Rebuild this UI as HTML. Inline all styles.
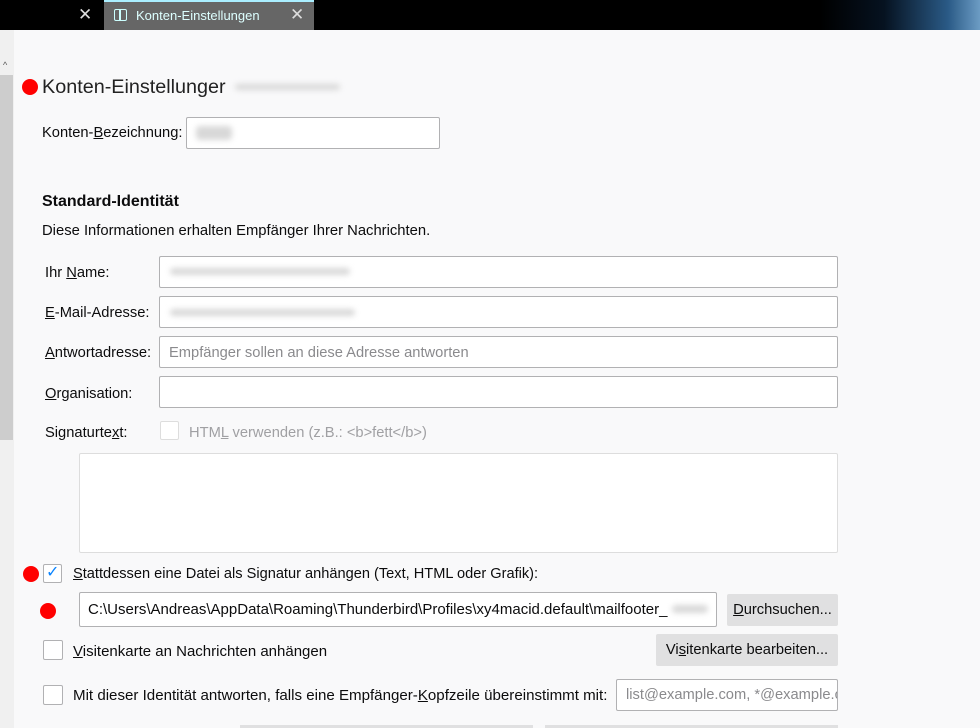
<!DOCTYPE html>
<html><head><meta charset="utf-8"><style>
*{box-sizing:border-box;margin:0;padding:0}
body{width:980px;height:728px;overflow:hidden;background:#f9f9fa;font-family:"Liberation Sans",sans-serif;color:#0c0c0d;position:relative;font-size:14.7px}
.a{position:absolute;white-space:nowrap}
.in{position:absolute;background:#fff;border:1px solid #b1b1b3;border-radius:2px}
.btn{position:absolute;background:#e0e0e1;border-radius:2px;text-align:center;font-size:14.7px}
.cb{position:absolute;width:19px;height:19px;background:#fff;border:1px solid #b1b1b3;border-radius:2px}
.dot{position:absolute;width:16px;height:16px;border-radius:50%;background:#f00}
.blur{position:absolute;background:#d8d8d8;filter:blur(3px);border-radius:4px}
u{text-decoration:underline}
</style></head><body>
<div class="a" style="left:0;top:0;width:980px;height:30px;background:#000"></div>
<div class="a" style="left:820px;top:0;width:160px;height:30px;background:linear-gradient(90deg,#000 0%,#061220 40%,#2a5a86 80%,#6c9cc4 100%)"></div>
<div class="a" style="left:78px;top:5px;color:#ddd;font-size:17px">✕</div>
<div class="a" style="left:104px;top:0;width:210px;height:30px;background:#666"></div>
<div class="a" style="left:104px;top:0;width:210px;height:2px;background:#aef"></div>
<div class="a" style="left:114px;top:9px;width:13px;height:12px;border:1.5px solid #cff;border-radius:2px"></div>
<div class="a" style="left:119px;top:9px;width:1.5px;height:12px;background:#cff"></div>
<div class="a" style="left:136px;top:8px;color:#dff;font-size:13px">Konten-Einstellungen</div>
<div class="a" style="left:290px;top:5px;color:#ddd;font-size:17px">✕</div>
<div class="a" style="left:0;top:30px;width:14px;height:698px;background:#f0f0f0"></div>
<div class="a" style="left:0;top:75px;width:13px;height:365px;background:#cdcdcd"></div>
<div class="a" style="left:3px;top:60px;font-size:9px;color:#555">^</div>
<div class="dot" style="left:22px;top:79px"></div>
<div class="a" style="left:42px;top:76px;font-size:19.8px;color:#222">Konten-Einstellunger</div>
<div class="blur" style="left:235px;top:84px;width:105px;height:6px"></div>
<div class="a" style="left:42px;top:125px">Konten-<u>B</u>ezeichnung:</div>
<div class="in" style="left:186px;top:117px;width:254px;height:32px"></div>
<div class="blur" style="left:196px;top:126px;width:36px;height:14px"></div>
<div class="a" style="left:42px;top:193px;font-size:16px;font-weight:bold">Standard-Identität</div>
<div class="a" style="left:42px;top:223px;font-size:14.8px">Diese Informationen erhalten Empfänger Ihrer Nachrichten.</div>
<div class="a" style="left:45px;top:265px">Ihr <u>N</u>ame:</div>
<div class="in" style="left:159px;top:256px;width:679px;height:32px"></div>
<div class="blur" style="left:170px;top:268px;width:180px;height:7px"></div>
<div class="a" style="left:45px;top:305px"><u>E</u>-Mail-Adresse:</div>
<div class="in" style="left:159px;top:296px;width:679px;height:32px"></div>
<div class="blur" style="left:170px;top:309px;width:185px;height:7px"></div>
<div class="a" style="left:45px;top:345px"><u>A</u>ntwortadresse:</div>
<div class="in" style="left:159px;top:336px;width:679px;height:32px"></div>
<div class="a" style="left:169px;top:345px;color:#8a8a8d">Empfänger sollen an diese Adresse antworten</div>
<div class="a" style="left:45px;top:386px"><u>O</u>rganisation:</div>
<div class="in" style="left:159px;top:376px;width:679px;height:32px"></div>
<div class="a" style="left:45px;top:425px">Signaturte<u>x</u>t:</div>
<div class="cb" style="left:160px;top:421px;border-color:#ddd"></div>
<div class="a" style="left:189px;top:425px;color:#a0a0a3">HTM<u>L</u> verwenden (z.B.: &lt;b&gt;fett&lt;/b&gt;)</div>
<div class="in" style="left:79px;top:453px;width:759px;height:100px;border-color:#ddd"></div>
<div class="dot" style="left:23px;top:566px"></div>
<div class="cb" style="left:43px;top:564px"></div>
<div class="a" style="left:46px;top:562px;color:#0a84ff;font-size:16px">✓</div>
<div class="a" style="left:73px;top:566px;font-size:14.6px"><u>S</u>tattdessen eine Datei als Signatur anhängen (Text, HTML oder Grafik):</div>
<div class="dot" style="left:40px;top:603px"></div>
<div class="in" style="left:79px;top:592px;width:638px;height:35px;overflow:hidden"><span class="a" style="left:8px;top:8px;font-size:15px">C:\Users\Andreas\AppData\Roaming\Thunderbird\Profiles\xy4macid.default\mailfooter_</span></div>
<div class="blur" style="left:672px;top:605px;width:36px;height:8px"></div>
<div class="btn" style="left:727px;top:594px;width:111px;height:32px;line-height:32px"><u>D</u>urchsuchen...</div>
<div class="cb" style="left:43px;top:640px;width:20px;height:20px"></div>
<div class="a" style="left:73px;top:643px;font-size:15px"><u>V</u>isitenkarte an Nachrichten anhängen</div>
<div class="btn" style="left:656px;top:634px;width:182px;height:32px;line-height:32px">Vi<u>s</u>itenkarte bearbeiten...</div>
<div class="cb" style="left:43px;top:685px;width:20px;height:20px"></div>
<div class="a" style="left:73px;top:687px;font-size:15.1px">Mit dieser Identität antworten, falls eine Empfänger-<u>K</u>opfzeile übereinstimmt mit:</div>
<div class="in" style="left:616px;top:679px;width:222px;height:32px;overflow:hidden"><span class="a" style="left:9px;top:7px;color:#8a8a8d">list@example.com, *@example.com</span></div>
<div class="a" style="left:240px;top:725px;width:293px;height:3px;background:#e0e0e1"></div>
<div class="a" style="left:545px;top:725px;width:293px;height:3px;background:#e0e0e1"></div>
</body></html>
